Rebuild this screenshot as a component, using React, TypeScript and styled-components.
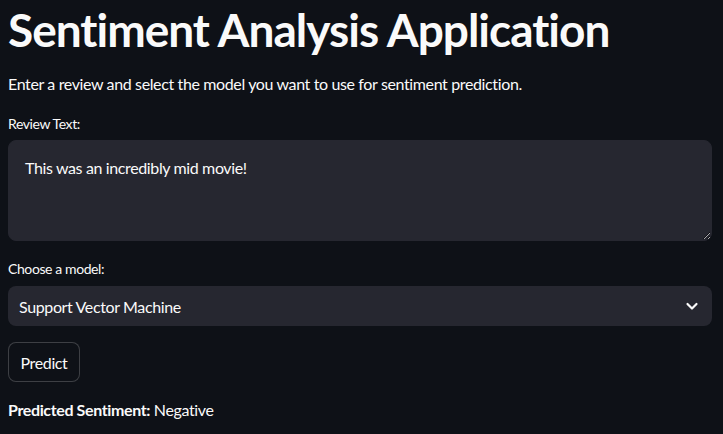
import React from "react";
import styled, { createGlobalStyle } from "styled-components";

const Global = createGlobalStyle`
  html, body { margin: 0; padding: 0; background: #0e1117; }
  body { font-family: "Lato", "Noto Sans", sans-serif; color: #fafafa; letter-spacing: -0.37px; }
  * { box-sizing: border-box; }
`;

const Page = styled.main`
  width: 723px;
  height: 434px;
  padding: 2px 11px 0 8px;
  background: #0e1117;
  display: flex;
  flex-direction: column;
  overflow: hidden;
`;

const Title = styled.h1`
  margin: 0;
  padding-top: 2px;
  font-size: 46px;
  font-weight: 700;
  line-height: 52px;
  color: #fafafa;
  letter-spacing: -1px;
`;

const Lead = styled.p`
  margin: 16px 0 0;
  font-size: 16px;
  line-height: 24px;
`;

const Label = styled.label<{ $top: number }>`
  display: block;
  font-size: 14px;
  line-height: 20px;
  letter-spacing: -0.4px;
  margin-top: ${(p) => p.$top}px;
`;

const TextArea = styled.textarea`
  display: block;
  width: 704px;
  height: 101px;
  margin-top: 6px;
  background: #262730;
  color: #fafafa;
  border: 1px solid #262730;
  border-radius: 8px;
  padding: 14px 16px;
  font-family: inherit;
  font-size: 16px;
  letter-spacing: -0.37px;
  line-height: 25.6px;
  resize: vertical;
  outline: none;
`;

const Select = styled.div`
  width: 704px;
  height: 40px;
  margin-top: 7px;
  background: #262730;
  border-radius: 8px;
  display: flex;
  align-items: center;
  justify-content: space-between;
  padding: 0 12px 0 11px;
  font-size: 16px;
`;

const Chevron = styled.svg`
  width: 16px;
  height: 16px;
`;

const Button = styled.button`
  align-self: flex-start;
  margin-top: 16px;
  width: 72px;
  height: 40px;
  padding: 0;
  background: #0e1117;
  color: #fafafa;
  border: 1px solid rgba(250, 250, 250, 0.2);
  border-radius: 8px;
  font-family: inherit;
  font-size: 16px;
  letter-spacing: -0.37px;
`;

const Result = styled.p`
  margin: 16px 0 0;
  font-size: 16px;
  line-height: 24px;
  b { font-weight: 700; }
`;

export default function App() {
  return (
    <>
      <Global />
      <Page>
        <Title>Sentiment Analysis Application</Title>
        <Lead>Enter a review and select the model you want to use for sentiment prediction.</Lead>
        <Label $top={18}>Review Text:</Label>
        <TextArea defaultValue="This was an incredibly mid movie!" />
        <Label $top={18}>Choose a model:</Label>
        <Select>
          <span>Support Vector Machine</span>
          <Chevron viewBox="0 0 16 16" fill="none">
            <path d="M3.5 6l4.5 4.5L12.5 6" stroke="#fafafa" strokeWidth="2.2" strokeLinecap="round" strokeLinejoin="round" />
          </Chevron>
        </Select>
        <Button>Predict</Button>
        <Result><b>Predicted Sentiment:</b> Negative</Result>
      </Page>
    </>
  );
}
